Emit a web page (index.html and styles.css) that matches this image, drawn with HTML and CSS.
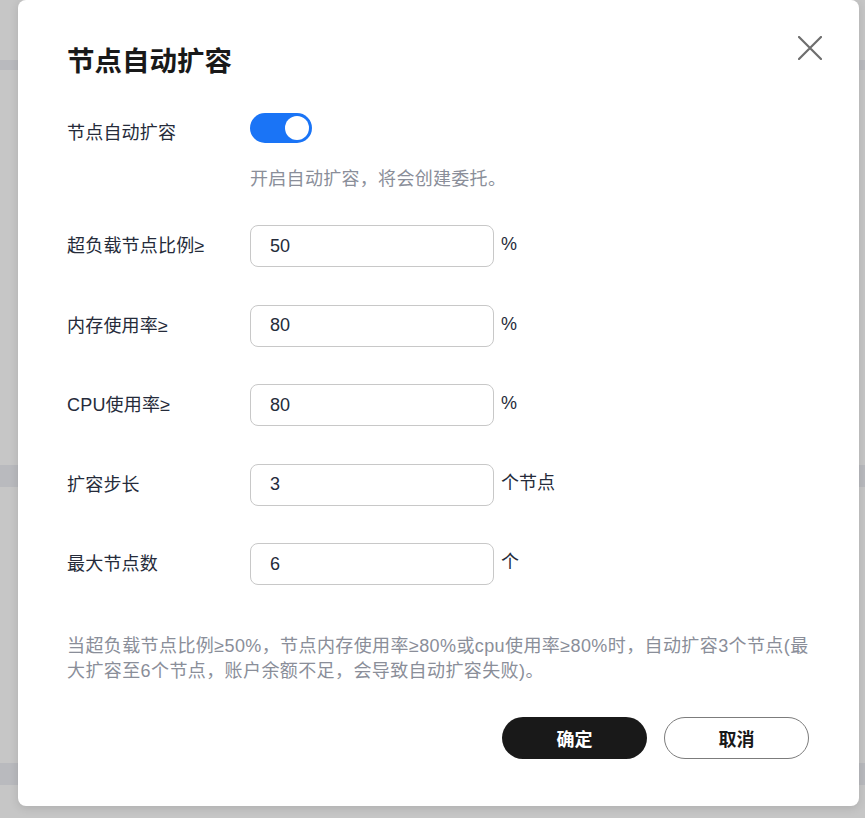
FILE: index.html
```html
<!DOCTYPE html>
<html lang="zh-CN">
<head>
<meta charset="utf-8">
<title>节点自动扩容</title>
<link rel="stylesheet" href="styles.css">
</head>
<body>
<div class="backdrop">
  <div class="stripe stripe-a"></div>
  <div class="stripe stripe-b"></div>
  <div class="stripe stripe-c"></div>
</div>

<div class="dialog" role="dialog" aria-labelledby="dlg-title">
  <button class="close" aria-label="关闭">
    <svg width="24" height="24" viewBox="0 0 24 24"><path d="M1 1 L23 23 M23 1 L1 23" stroke="#6e6e6e" stroke-width="2.2" stroke-linecap="round" fill="none"/></svg>
  </button>

  <header class="head">
    <h2 id="dlg-title" class="title">节点自动扩容</h2>
  </header>

  <div class="row row-toggle">
    <span class="label label-top">节点自动扩容</span>
    <span class="switch"><span class="knob"></span></span>
  </div>
  <p class="hint">开启自动扩容，将会创建委托。</p>

  <div class="fields">
    <div class="row">
      <span class="label">超负载节点比例≥</span>
      <input class="field" value="50">
      <span class="unit">%</span>
    </div>
    <div class="row">
      <span class="label">内存使用率≥</span>
      <input class="field" value="80">
      <span class="unit">%</span>
    </div>
    <div class="row">
      <span class="label">CPU使用率≥</span>
      <input class="field" value="80">
      <span class="unit">%</span>
    </div>
    <div class="row">
      <span class="label">扩容步长</span>
      <input class="field" value="3">
      <span class="unit">个节点</span>
    </div>
    <div class="row">
      <span class="label">最大节点数</span>
      <input class="field" value="6">
      <span class="unit">个</span>
    </div>
  </div>

  <p class="desc">当超负载节点比例≥50%，节点内存使用率≥80%或cpu使用率≥80%时，自动扩容3个节点(最大扩容至6个节点，账户余额不足，会导致自动扩容失败)。</p>

  <div class="actions">
    <button class="btn btn-primary">确定</button>
    <button class="btn btn-ghost">取消</button>
  </div>
</div>
</body>
</html>
```

FILE: styles.css
```css
* { box-sizing: border-box; }

html, body {
  margin: 0;
  padding: 0;
}

body {
  width: 865px;
  height: 818px;
  overflow: hidden;
  background: #c6c6c6;
  font-family: "Liberation Sans", "Noto Sans CJK SC", sans-serif;
  position: relative;
}

.backdrop {
  display: flex;
  flex-direction: column;
}

.stripe {
  background: #b9babe;
}

.stripe-a { margin-top: 60px; height: 10px; }
.stripe-b { margin-top: 395px; height: 22px; }
.stripe-c { margin-top: 276px; height: 22px; }

.dialog {
  position: absolute;
  left: 18px;
  top: 0;
  width: 841px;
  height: 806px;
  background: #ffffff;
  border-radius: 8px;
  box-shadow: 0 2px 10px rgba(0, 0, 0, 0.12);
  padding: 44px 50px 0 49px;
  display: flex;
  flex-direction: column;
}

.close {
  position: absolute;
  top: 36px;
  right: 37px;
  width: 24px;
  height: 24px;
  padding: 0;
  border: 0;
  background: transparent;
  display: flex;
}

.head {
  display: flex;
  align-items: center;
  height: 36px;
}

.title {
  margin: 0;
  font-size: 27.5px;
  line-height: 36px;
  font-weight: 700;
  color: #191919;
}

.row {
  display: grid;
  grid-template-columns: 183px auto 1fr;
  align-items: center;
}

.row-toggle {
  margin-top: 33px;
  align-items: start;
}

.label {
  font-size: 18px;
  line-height: 24px;
  color: #252b3a;
  letter-spacing: 0.2px;
}

.label-top {
  padding-top: 8px;
}

.switch {
  width: 62px;
  height: 30px;
  border-radius: 15px;
  background: #1a74f6;
  display: flex;
  align-items: center;
  justify-content: flex-end;
  padding-right: 3px;
}

.knob {
  width: 24px;
  height: 24px;
  border-radius: 50%;
  background: #ffffff;
}

.hint {
  margin: 22px 0 0 183px;
  font-size: 18px;
  line-height: 24px;
  color: #8a8e99;
  letter-spacing: 0.3px;
}

.fields {
  margin-top: 34px;
  display: flex;
  flex-direction: column;
  gap: 37.5px;
}

.field {
  width: 244px;
  height: 42px;
  border: 1.5px solid #c8c8c8;
  border-radius: 8px;
  padding: 0 0 0 19px;
  font-family: "Liberation Sans", "Noto Sans CJK SC", sans-serif;
  font-size: 18px;
  color: #252b3a;
  background: #fff;
  outline: none;
}

.unit {
  margin-left: 7px;
  font-size: 18px;
  line-height: 24px;
  color: #252b3a;
  align-self: center;
  margin-top: -4px;
}

.desc {
  margin: 49px 0 0 0;
  font-size: 18px;
  line-height: 25px;
  color: #8a8e99;
  letter-spacing: 0.4px;
}

.actions {
  margin-top: 33px;
  display: flex;
  justify-content: flex-end;
  gap: 17px;
}

.btn {
  width: 145px;
  height: 42px;
  border-radius: 21px;
  font-family: "Liberation Sans", "Noto Sans CJK SC", sans-serif;
  font-size: 18px;
  font-weight: 600;
  cursor: pointer;
}

.btn-primary {
  background: #191919;
  color: #ffffff;
  border: 0;
}

.btn-ghost {
  background: #ffffff;
  color: #191919;
  border: 1.5px solid #7c7c7c;
}
```
